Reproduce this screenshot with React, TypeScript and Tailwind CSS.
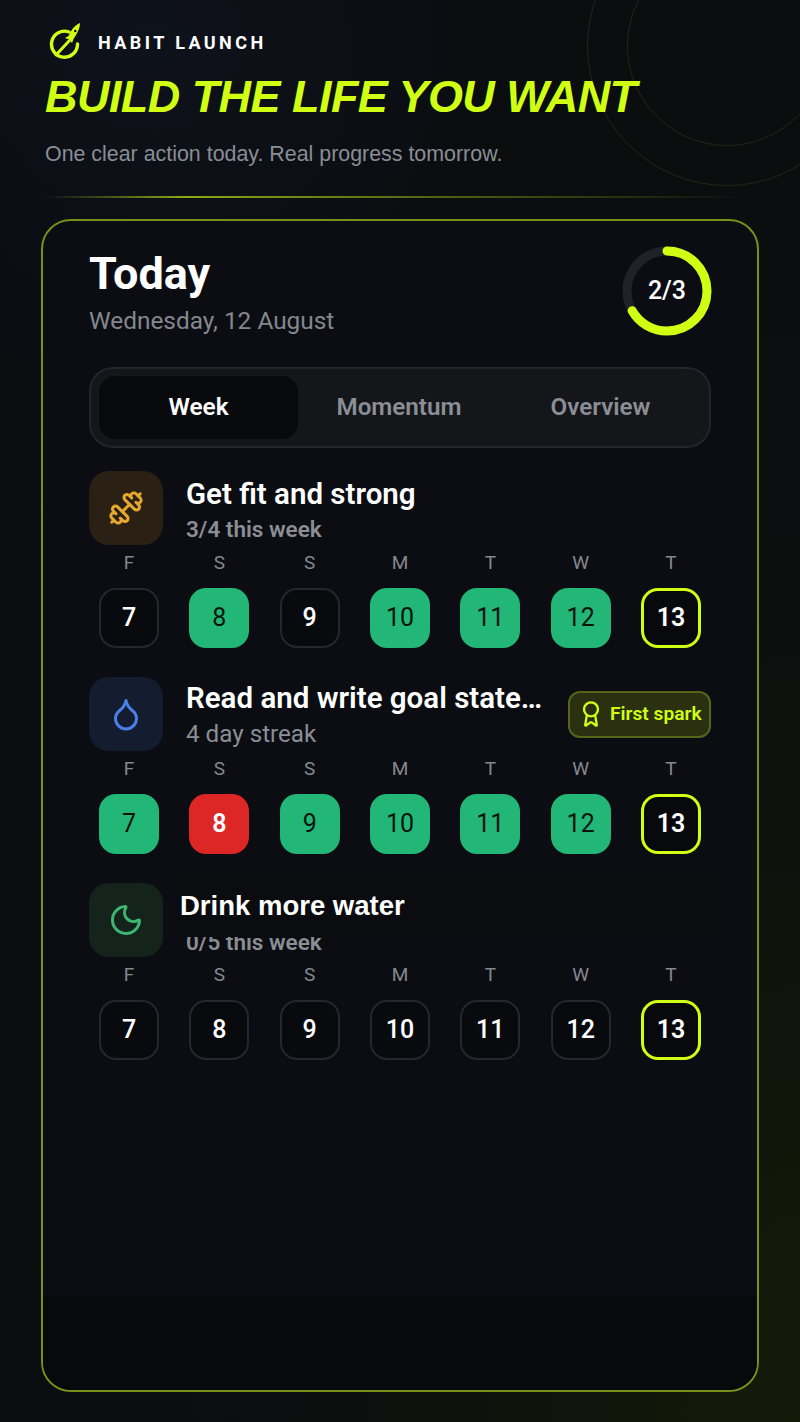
import type { ReactNode } from "react";
import { Award, Droplet, Dumbbell, Moon } from "lucide-react";

const days = ["F", "S", "S", "M", "T", "W", "T"];
const nums = [7, 8, 9, 10, 11, 12, 13];
type S = "n" | "g" | "r";

function DayRow({ states }: { states: S[] }) {
  return (
    <div className="mt-[5px] flex justify-between px-[10px]">
      {nums.map((n, i) => {
        const s = states[i];
        const today = n === 13;
        return (
          <div key={n} className="flex w-[60px] flex-col items-center">
            <span className="h-[24px] text-[19px] leading-[26px] text-[#85888e]">{days[i]}</span>
            <div
              className={
                today
                  ? "mt-[14px] flex h-[60px] w-[60px] items-center justify-center rounded-[17px] border-[3px] border-[#d0ff14] bg-[#08090c] text-[25px] font-semibold text-white"
                  : s === "g"
                    ? "mt-[14px] flex h-[60px] w-[60px] items-center justify-center rounded-[17px] bg-[#22b777] text-[25px] font-normal text-[#06140e]"
                    : s === "r"
                      ? "mt-[14px] flex h-[60px] w-[60px] items-center justify-center rounded-[17px] bg-[#dd2626] text-[25px] font-semibold text-white"
                      : "mt-[14px] flex h-[60px] w-[60px] items-center justify-center rounded-[17px] border-2 border-[#24272c] bg-[#090a0e] text-[25px] font-medium text-white"
              }
            >
              {n}
            </div>
          </div>
        );
      })}
    </div>
  );
}

function Logo() {
  return (
    <svg width="34" height="38" viewBox="0 0 34 38" className="shrink-0" fill="none">
      <path d="M20 10A13 13 0 1 0 28.500 22" stroke="#d0ff14" strokeWidth="3.400" strokeLinecap="round" />
      <path d="M7 33 20 19" stroke="#d0ff14" strokeWidth="3" strokeLinecap="round" />
      <path d="M31 1C27 2.500 24 6 21.500 10L19.500 14L16 16L20 17.500L23 21L24.500 17L27 13C29.500 9 31 5 31 1Z" fill="#d0ff14" />
      <circle cx="26.300" cy="9" r="1.200" fill="#0b0e14" />
    </svg>
  );
}

function Ring() {
  const r = 40;
  const c = 2 * Math.PI * r;
  return (
    <div className="relative h-[90px] w-[90px]">
      <svg width="90" height="90" viewBox="0 0 90 90" className="-rotate-90">
        <circle cx="45" cy="45" r={r} fill="none" stroke="#1f2327" strokeWidth="9" />
        <circle cx="45" cy="45" r={r} fill="none" stroke="#d0ff14" strokeWidth="9" strokeLinecap="round" strokeDasharray={`${c * 0.667} ${c}`} />
      </svg>
      <span className="absolute inset-0 flex items-center justify-center text-[25px] font-medium text-white">2/3</span>
    </div>
  );
}

function Habit({
  tile,
  icon,
  title,
  sub,
  subClass,
  textClass,
  titleClass,
  states,
  badge,
}: {
  tile: string;
  icon: ReactNode;
  title: string;
  sub: string;
  subClass: string;
  textClass: string;
  titleClass: string;
  states: S[];
  badge?: boolean;
}) {
  return (
    <div className="h-[206px]">
      <div className="flex h-[74px] items-center">
        <div className={`flex h-[74px] w-[74px] shrink-0 items-center justify-center rounded-[20px] ${tile}`}>{icon}</div>
        <div className={`ml-[23px] min-w-0 flex-1 ${textClass}`}>
          <div className={`truncate text-[29.5px] font-semibold text-white ${titleClass}`}>{title}</div>
          <div className={subClass}>{sub}</div>
        </div>
        {badge && (
          <div className="ml-[23px] flex h-[47px] w-[143px] shrink-0 items-center gap-[5px] rounded-[12px] border-2 border-[#56651a] bg-[#2a3010] pl-[7px]">
            <Award size={28} color="#d0ff14" strokeWidth={2} />
            <span className="text-[19.2px] font-semibold text-[#d0ff14]">First spark</span>
          </div>
        )}
      </div>
      <DayRow states={states} />
    </div>
  );
}

export default function App() {
  return (
    <div className="relative h-[1422px] w-[800px] overflow-hidden bg-[radial-gradient(ellipse_at_100%_100%,#141a08_0%,#0c0f0e_40%,#090b10_100%)] font-['Roboto',sans-serif]">
      <div className="absolute left-0 top-0 h-[400px] w-[500px] bg-[radial-gradient(ellipse_at_30%_10%,#0e121b_0%,transparent_70%)]" />
      <div className="absolute left-[587px] top-[-94px] h-[280px] w-[280px] rounded-full border border-[#23280f]" />
      <div className="absolute left-[627px] top-[-54px] h-[200px] w-[200px] rounded-full border border-[#23280f]" />

      <div className="relative px-[45px] pt-[22px]">
        <div className="flex h-[38px] items-center gap-[15px] pl-[4px]">
          <Logo />
          <span className="mt-[2px] text-[18px] font-bold tracking-[0.19em] text-white">HABIT LAUNCH</span>
        </div>
        <h1 className="mt-[8px] font-['Liberation_Sans',sans-serif] text-[45px] font-bold italic leading-[58px] tracking-[-0.55px] text-[#d0ff14]">
          BUILD THE LIFE YOU WANT
        </h1>
        <p className="mt-[14px] font-['Liberation_Sans',sans-serif] text-[21.4px] leading-[28px] text-[#8a8d94]">
          One clear action today. Real progress tomorrow.
        </p>
        <div className="mt-[28px] h-[2px] w-[700px] bg-gradient-to-r from-transparent via-[#8ba815] via-20% to-transparent" />
      </div>

      <div className="relative mx-[41px] mt-[21px] h-[1173px] overflow-hidden rounded-[30px] border-2 border-[#7a8e18] bg-[#0b0d12] px-[46px] pt-[24px]">
        <div className="flex items-start justify-between">
          <div>
            <div className="text-[45px] font-bold leading-[58px] text-white">Today</div>
            <div className="mt-[2px] text-[24.4px] leading-[32px] text-[#84878e]">Wednesday, 12 August</div>
          </div>
          <div className="mr-[-1px] mt-[1px]">
            <Ring />
          </div>
        </div>

        <div className="mt-[30px] flex h-[81px] items-center rounded-[24px] border-2 border-[#22252a] bg-[#14161a] px-[8px]">
          <div className="flex h-[63px] w-[199px] items-center justify-center rounded-[16px] bg-[#08090c] text-[24.4px] font-semibold text-white">Week</div>
          <div className="flex h-[63px] w-[202px] items-center justify-center text-[24.2px] font-semibold text-[#8b8e95]">Momentum</div>
          <div className="flex h-[63px] w-[201px] items-center justify-center text-[24.2px] font-semibold text-[#8b8e95]">Overview</div>
        </div>

        <div className="mt-[23px]">
          <Habit
            tile="bg-[#2a2114]"
            icon={<Dumbbell size={36} color="#e6a92e" strokeWidth={2} />}
            title="Get fit and strong"
            sub="3/4 this week"
            textClass="pt-[3px]"
            titleClass="mb-[2px] leading-[36px]"
            subClass="text-[22.5px] font-semibold leading-[30px] text-[#8b8e95]"
            states={["n", "g", "n", "g", "g", "g", "n"]}
          />
          <Habit
            tile="bg-[#141c30]"
            icon={<Droplet size={36} color="#4a7fe6" strokeWidth={2} />}
            title="Read and write goal statement daily"
            sub="4 day streak"
            textClass="pt-[2px]"
            titleClass="mb-[4px] leading-[34px]"
            subClass="text-[24.2px] font-normal leading-[30px] text-[#8b8e95]"
            states={["g", "r", "g", "g", "g", "g", "n"]}
            badge
          />
          <div className="relative">
            <Habit
              tile="bg-[#14241c]"
              icon={<Moon size={36} color="#3fb56f" strokeWidth={2} />}
              title="Drink more water"
              sub="0/5 this week"
              textClass="pt-[5px]"
              titleClass="leading-[38px]"
              subClass="text-[22.5px] font-semibold leading-[30px] text-[#8b8e95]"
              states={["n", "n", "n", "n", "n", "n", "n"]}
            />
            <div className="absolute left-[85px] top-[-12px] flex h-[66px] w-[550px] items-center bg-[#0a0c10] pl-[6px] pt-[3px] font-['Liberation_Sans',sans-serif] text-[27.5px] font-bold text-white">
              Drink more water
            </div>
          </div>
        </div>

        <div className="absolute inset-x-0 bottom-0 h-[94px] bg-[#07090d]" />
      </div>
    </div>
  );
}
